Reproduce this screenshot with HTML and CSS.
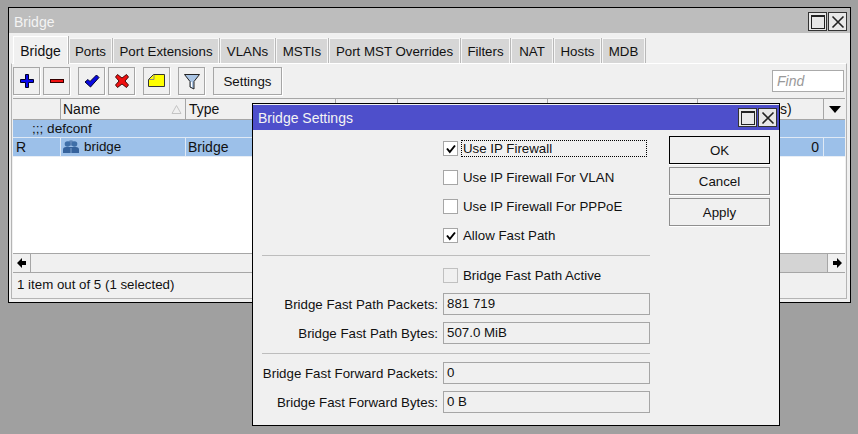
FILE: index.html
```html
<!DOCTYPE html>
<html lang="en">
<head>
<meta charset="utf-8">
<title>Bridge</title>
<link rel="stylesheet" href="styles.css">
</head>
<body>
<div class="desktop">
  <section class="window main-window">
    <header class="titlebar">
      <span class="title">Bridge</span>
      <span class="win-controls">
        <button class="win-btn"><svg width="16" height="16" viewBox="0 0 16 16"><rect x="1.5" y="1.5" width="13" height="13" fill="none" stroke="#222" stroke-width="1"/><rect x="1" y="1" width="14" height="2" fill="#222"/></svg></button>
        <button class="win-btn"><svg width="16" height="16" viewBox="0 0 16 16"><path d="M2.5 2.5 13.500 13.500M13.500 2.500 2.500 13.500" stroke="#222" stroke-width="1.600" fill="none"/></svg></button>
      </span>
    </header>
    <nav class="tabs">
      <span class="tab active">Bridge</span>
      <span class="tab t-ports">Ports</span>
      <span class="tab t-ext">Port Extensions</span>
      <span class="tab t-vlans">VLANs</span>
      <span class="tab t-mstis">MSTIs</span>
      <span class="tab t-over">Port MST Overrides</span>
      <span class="tab t-filters">Filters</span>
      <span class="tab t-nat">NAT</span>
      <span class="tab t-hosts">Hosts</span>
      <span class="tab t-mdb">MDB</span>
    </nav>
    <div class="panel">
      <div class="toolbar">
        <button class="tool"><svg width="16" height="16" viewBox="0 0 16 16"><path d="M6.500 1.500h3v5h5v3h-5v5h-3v-5h-5v-3h5z" fill="#0808f0" stroke="#000028" stroke-width="1"/></svg></button>
        <button class="tool"><svg width="16" height="16" viewBox="0 0 16 16"><rect x="1.500" y="6.500" width="13" height="3" fill="#f01010" stroke="#300" stroke-width="1"/></svg></button>
        <button class="tool gap-left"><svg width="16" height="16" viewBox="0 0 16 16"><path d="M1 9l3-2.500 2 2L12.500 2 15 4.500 6.500 14z" fill="#0808e0" stroke="#000028" stroke-width="1"/></svg></button>
        <button class="tool"><svg width="16" height="16" viewBox="0 0 16 16"><path d="M3.500 1.500 8 5l4.500-3.500 2 2.500L11 8l3.500 4-2 2.500L8 11l-4.500 3.500-2-2.500L5 8 1.500 4z" fill="#f01010" stroke="#300" stroke-width=".9"/></svg></button>
        <button class="tool gap-left"><svg width="17" height="14" viewBox="0 0 17 14"><path d="M.5 5.500 5.500.5h11v12H.5z" fill="#ffff00" stroke="#333" stroke-width="1"/><path d="M1 5.500h5V1" fill="none" stroke="#888" stroke-width="1"/></svg></button>
        <button class="tool gap-left"><svg width="16" height="17" viewBox="0 0 16 17"><path d="M.5 1.500h15L10 8.500v7.500l-4-2V8.500z" fill="#a9c4e4" stroke="#222" stroke-width="1"/><path d="M7.500 9v5" stroke="#fff" stroke-width="1"/></svg></button>
        <button class="tool settings">Settings</button>
        <span class="find">Find</span>
      </div>
      <div class="table">
        <div class="row head">
          <span class="cell"></span>
          <span class="cell name-head">Name<svg class="sort" width="11" height="9" viewBox="0 0 11 9"><path d="M5.500 .5 10 8.500H1z" fill="none" stroke="#c4c4c4"/></svg></span>
          <span class="cell type-head">Type</span>
          <span class="cell"></span>
          <span class="cell"></span>
          <span class="cell"></span>
          <span class="cell right">s)</span>
          <span class="cell menu"><svg width="12" height="7" viewBox="0 0 12 7"><path d="M0 0h12L6 7z" fill="#000"/></svg></span>
        </div>
        <div class="group">;;; defconf</div>
        <div class="row selected">
          <span class="cell">R</span>
          <span class="cell name-cell"><svg width="16" height="13" viewBox="0 0 16 13"><circle cx="8" cy="3" r="2.800" fill="#5f86b8"/><circle cx="4.500" cy="4" r="2.800" fill="#3f6fa8"/><circle cx="11.500" cy="4" r="2.800" fill="#3f6fa8"/><path d="M0 13V9.500Q0 7 3 7h10q3 0 3 2.500V13z" fill="#35629c"/><path d="M8 8v5" stroke="#7fa2cc" stroke-width="1"/></svg>bridge</span>
          <span class="cell">Bridge</span>
          <span class="cell"></span>
          <span class="cell"></span>
          <span class="cell"></span>
          <span class="cell right">0</span>
          <span class="cell"></span>
        </div>
        <div class="table-fill"></div>
        <div class="scrollbar">
          <span class="arrow"><svg width="10" height="10" viewBox="0 0 10 10"><path d="M0 5 5 0v3h4v4H5v3z" fill="#000"/></svg></span>
          <span class="thumb"></span>
          <span class="track"></span>
          <span class="arrow"><svg width="10" height="10" viewBox="0 0 10 10"><path d="M10 5 5 0v3H1v4h4v3z" fill="#000"/></svg></span>
        </div>
      </div>
      <div class="status">1 item out of 5 (1 selected)</div>
    </div>
  </section>

  <section class="window dialog">
    <header class="titlebar">
      <span class="title">Bridge Settings</span>
      <span class="win-controls">
        <button class="win-btn"><svg width="16" height="16" viewBox="0 0 16 16"><rect x="1.5" y="1.500" width="13" height="13" fill="none" stroke="#222" stroke-width="1"/><rect x="1" y="1" width="14" height="2" fill="#222"/></svg></button>
        <button class="win-btn"><svg width="16" height="16" viewBox="0 0 16 16"><path d="M2.500 2.500 13.500 13.500M13.500 2.500 2.500 13.500" stroke="#222" stroke-width="1.600" fill="none"/></svg></button>
      </span>
    </header>
    <div class="dialog-body">
      <form class="form">
        <label class="check-row"><span class="check on"><svg width="12" height="12" viewBox="0 0 12 12"><path d="M2 5.500 4.800 9 10 2.500" fill="none" stroke="#000" stroke-width="2"/></svg></span><span class="check-label focused">Use IP Firewall</span></label>
        <label class="check-row"><span class="check"></span><span class="check-label">Use IP Firewall For VLAN</span></label>
        <label class="check-row"><span class="check"></span><span class="check-label">Use IP Firewall For PPPoE</span></label>
        <label class="check-row"><span class="check on"><svg width="12" height="12" viewBox="0 0 12 12"><path d="M2 5.500 4.800 9 10 2.500" fill="none" stroke="#000" stroke-width="2"/></svg></span><span class="check-label">Allow Fast Path</span></label>
        <hr class="sep first">
        <label class="check-row active-row"><span class="check disabled"></span><span class="check-label">Bridge Fast Path Active</span></label>
        <div class="field-row"><span class="field-label">Bridge Fast Path Packets:</span><span class="field">881 719</span></div>
        <div class="field-row"><span class="field-label">Bridge Fast Path Bytes:</span><span class="field">507.0 MiB</span></div>
        <hr class="sep second">
        <div class="field-row"><span class="field-label">Bridge Fast Forward Packets:</span><span class="field">0</span></div>
        <div class="field-row"><span class="field-label">Bridge Fast Forward Bytes:</span><span class="field">0 B</span></div>
      </form>
      <div class="actions">
        <button class="action default">OK</button>
        <button class="action">Cancel</button>
        <button class="action">Apply</button>
      </div>
    </div>
  </section>
</div>
</body>
</html>
```

FILE: styles.css
```css
* { box-sizing: border-box; }

html, body { margin: 0; padding: 0; }

body {
  background: #a0a0a0;
  font: 13.3px "Liberation Sans", Arial, sans-serif;
  color: #111;
}

button { font: inherit; color: inherit; padding: 0; }

.desktop {
  position: relative;
  width: 858px;
  height: 434px;
  overflow: hidden;
}

/* Windows sit on a free desktop */
.window {
  position: absolute;
  display: flex;
  flex-direction: column;
  background: #f0f0f0;
  border: 1px solid #000;
}

.main-window { left: 8px; top: 7px; width: 843px; height: 296px; }
.dialog { left: 252px; top: 103px; width: 528px; height: 323px; }

.titlebar {
  display: flex;
  align-items: center;
  justify-content: space-between;
  height: 25px;
  flex: none;
  background: #bdbdbd;
  color: #f4f4f4;
  font-size: 14px;
  padding: 2px 3px 0 5px;
}

.dialog .titlebar {
  background: #4e4fcb;
  height: 25px;
  margin-top: 1px;
  padding: 0 2px 0 5px;
}

.win-controls { display: flex; gap: 1px; }

.win-btn {
  display: flex;
  align-items: center;
  justify-content: center;
  width: 19px;
  height: 19px;
  background: #e8e8e8;
  border: 1px solid #333;
}

/* Tab strip */
.tabs {
  display: flex;
  height: 30px;
  flex: none;
  padding: 2px 0 0 4px;
  align-items: flex-end;
}

.tab {
  display: flex;
  align-items: center;
  justify-content: center;
  height: 25px;
  margin-right: 1px;
  background: #d6d6d6;
  border: solid #f6f6f6;
  border-width: 1px 1px 0 1px;
  box-shadow: 1px 0 0 #b8b8b8;
  white-space: nowrap;
}

.tab.active {
  width: 55px;
  height: 28px;
  margin-right: 1px;
  background: #f0f0f0;
  border-color: #fff;
  box-shadow: 1px 0 0 #b0b0b0;
  font-size: 14px;
  position: relative;
  top: 1px;
}

.t-ports { width: 43px; }
.t-ext { width: 106px; }
.t-vlans { width: 55px; }
.t-mstis { width: 52px; }
.t-over { width: 131px; }
.t-filters { width: 49px; }
.t-nat { width: 42px; }
.t-hosts { width: 47px; }
.t-mdb { width: 43px; }

.panel {
  flex: 1;
  display: flex;
  flex-direction: column;
  margin: 0 3px 3px 2px;
  border: 1px solid #b4b4b4;
  border-top-color: #fff;
  padding-left: 1px;
  min-height: 0;
}

.toolbar {
  display: flex;
  align-items: center;
  gap: 3px;
  height: 34px;
  flex: none;
}

.tool {
  display: flex;
  align-items: center;
  justify-content: center;
  width: 27px;
  height: 28px;
  background: #f0f0f0;
  border: 1px solid #a6a6a6;
  box-shadow: 1px 1px 0 #fff;
}

.gap-left { margin-left: 5px; }
.settings { width: 69px; margin-left: 5px; }

.find {
  margin-left: auto;
  margin-right: 2px;
  width: 72px;
  height: 22px;
  padding: 2px 4px;
  background: #fff;
  border: 1px solid #aaa;
  color: #999;
  font-style: italic;
  font-size: 14px;
  line-height: 16px;
}

/* Item list */
.table {
  flex: 1;
  display: flex;
  flex-direction: column;
  width: 832px;
  background: #fff;
  border-top: 1px solid #a6a6a6;
  min-height: 0;
}

.row {
  display: grid;
  grid-template-columns: 48px 125px 150px 62px 150px 150px 126px 21px;
  flex: none;
}

.head { height: 21px; background: #f0f0f0; border-bottom: 1px solid #a6a6a6; }
.head .cell { border-right: 1px solid #a6a6a6; font-size: 14px; }
.head .cell:last-child { border-right: 0; }
.head .type-head { padding-left: 3px; }

.cell {
  display: flex;
  align-items: center;
  padding: 0 2px;
  white-space: nowrap;
  position: relative;
}

.right { justify-content: flex-end; padding-right: 4px; }
.head .right { justify-content: flex-start; padding-left: 82px; }

.menu { justify-content: center; padding: 0; }

.sort { position: absolute; right: 3px; top: 6px; }

.group {
  height: 18px;
  flex: none;
  padding-left: 19px;
  background: #9cc0e9;
  border-bottom: 1px solid #dfe9f5;
  line-height: 17px;
  font-size: 13.6px;
}

.selected { height: 18px; background: #9cc0e9; font-size: 14px; }
.selected .cell { border-right: 1px solid #dfe9f5; padding-bottom: 1px; }
.selected .cell:first-child { padding-left: 3px; }
.selected .cell:last-child { border-right: 0; }

.name-cell { gap: 5px; font-size: 13.4px; }

.table-fill { flex: 1; border-top: 1px solid #e8eef6; }

.scrollbar {
  display: flex;
  height: 20px;
  flex: none;
  background: #f0f0f0;
  border: solid #a6a6a6;
  border-width: 1px 0;
}

.arrow {
  display: flex;
  align-items: center;
  justify-content: center;
  width: 18px;
  background: #f0f0f0;
  border-right: 1px solid #a6a6a6;
}

.arrow:last-child { border-right: 0; border-left: 1px solid #a6a6a6; }
.thumb { width: 600px; }
.track { flex: 1; background: #d4d4d4; }

.status {
  height: 25px;
  flex: none;
  padding-left: 4px;
  line-height: 23px;
}

/* Settings dialog */
.dialog .title { font-size: 14px; }

.dialog-body { flex: 1; display: flex; align-items: flex-start; padding: 4px 0 0 9px; }

.form { width: 388px; display: flex; flex-direction: column; }

.check-row {
  display: flex;
  align-items: center;
  gap: 4px;
  height: 29px;
  padding-left: 181px;
}

.active-row { margin-bottom: 3px; }

.check {
  display: flex;
  align-items: center;
  justify-content: center;
  width: 15px;
  height: 15px;
  background: #fff;
  border: 1px solid #a6a6a6;
  flex: none;
}

.check.disabled { background: #f0f0f0; border-color: #c0c0c0; }

.check-label { flex: 1; line-height: 15px; padding-left: 1px; }

.focused { outline: 1px dotted #000; outline-offset: 0; margin-right: 4px; }

.sep { width: 100%; margin: 5px 0 5px; border: 0; border-top: 1px solid #bdbdbd; }
.sep.second { margin: 2px 0 8px; }

.field-row {
  display: grid;
  grid-template-columns: 176px 207px;
  column-gap: 5px;
  height: 22px;
  align-items: center;
  margin-bottom: 7px;
}

.field-label { text-align: right; }

.field {
  height: 22px;
  padding: 0 3px;
  line-height: 20px;
  border: 1px solid #a6a6a6;
  background: #f0f0f0;
}

.actions { display: flex; flex-direction: column; gap: 3px; margin: 2px 0 0 19px; }

.action {
  width: 101px;
  height: 28px;
  background: #f0f0f0;
  border: 1px solid #8f8f8f;
  box-shadow: 0 1px 0 #fff;
}

.action.default { border-color: #000; }
```
